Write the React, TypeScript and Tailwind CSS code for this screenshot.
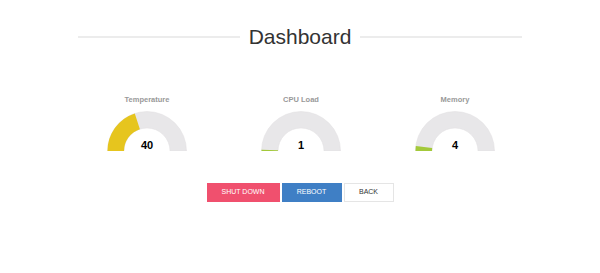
import React from "react";

type GaugeProps = { label: string; value: number; color: string };

// annular sector from angle a0 to a1 (degrees, 180 = left, 0 = right)
function arcPath(cx: number, cy: number, ro: number, ri: number, a0: number, a1: number) {
  const r = (d: number) => (d * Math.PI) / 180;
  const p = (rad: number, a: number) => [cx + rad * Math.cos(r(a)), cy - rad * Math.sin(r(a))];
  const [x0, y0] = p(ro, a0);
  const [x1, y1] = p(ro, a1);
  const [x2, y2] = p(ri, a1);
  const [x3, y3] = p(ri, a0);
  return `M${x0} ${y0} A${ro} ${ro} 0 0 1 ${x1} ${y1} L${x2} ${y2} A${ri} ${ri} 0 0 0 ${x3} ${y3} Z`;
}

function Gauge({ label, value, color }: GaugeProps) {
  const end = 180 - (value / 100) * 180;
  return (
    <div className="flex flex-col items-center">
      <p className="text-[7.5px] leading-[12px] font-bold text-[#999]">{label}</p>
      <div className="relative mt-[5px] w-[80px] h-[40px]">
        <svg width="80" height="40" viewBox="0 0 80 40">
          <path d={arcPath(40, 40, 39.5, 23, 180, 0)} fill="#e8e7e9" stroke="#e0dfe1" strokeWidth="0.5" />
          <path d={arcPath(40, 40, 39.5, 23, 180, end)} fill={color} />
        </svg>
        <span className="absolute left-0 right-0 bottom-[-1px] text-center text-[11px] leading-[14px] font-bold text-black">
          {value}
        </span>
      </div>
    </div>
  );
}

export default function App() {
  return (
    <div className="w-[600px] h-[273px] bg-white font-['Liberation_Sans',Arial,sans-serif]">
      {/* Title with rules */}
      <div className="flex items-center pt-[22px] px-[78px]">
        <div className="flex-1 h-[2px] bg-[#ececec]" />
        <h1 className="px-[9px] text-[21px] leading-[30px] text-[#333]">Dashboard</h1>
        <div className="flex-1 h-[2px] bg-[#ececec]" />
      </div>

      {/* Gauges */}
      <div className="grid grid-cols-3 w-[462px] ml-[70px] mt-[42px]">
        <Gauge label="Temperature" value={40} color="#e6c51e" />
        <Gauge label="CPU Load" value={1} color="#a3c93a" />
        <Gauge label="Memory" value={4} color="#a3c93a" />
      </div>

      {/* Actions */}
      <div className="flex justify-center gap-[2px] mt-[32px]">
        <button className="w-[73px] h-[19px] bg-[#f0506e] text-white text-[7px] uppercase">Shut down</button>
        <button className="w-[60px] h-[19px] bg-[#3f7fc5] text-white text-[7px] uppercase">Reboot</button>
        <button className="w-[50px] h-[19px] bg-white border border-[#e5e5e5] text-[#333] text-[7px] uppercase">Back</button>
      </div>
    </div>
  );
}
